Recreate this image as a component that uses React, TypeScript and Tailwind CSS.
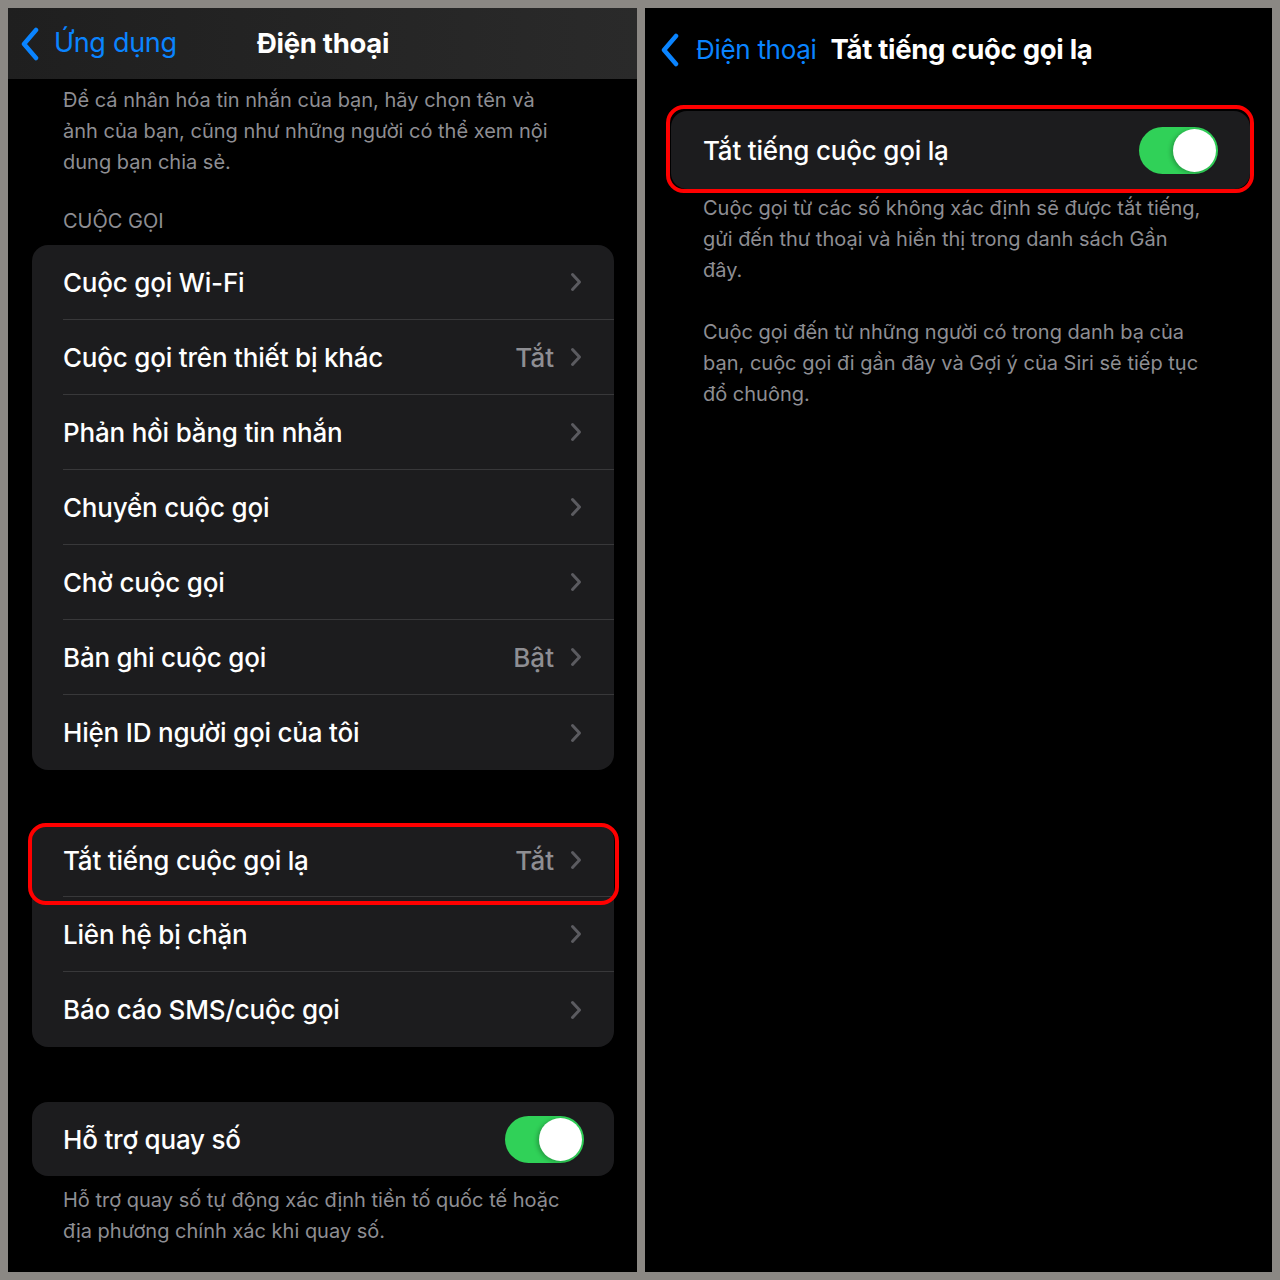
import React from 'react';

const font = { fontFamily: 'Inter, "Noto Sans", sans-serif' };

const Chevron = () => (
  <svg width="12" height="20" viewBox="0 0 12 20" fill="none">
    <path d="M2.5 2.5 L9.5 10 L2.5 17.5" stroke="#5b5b60" strokeWidth="3" strokeLinecap="round" strokeLinejoin="round" />
  </svg>
);

const BackChevron = () => (
  <svg width="20" height="34" viewBox="0 0 20 34" fill="none">
    <path d="M16 3 L4 17 L16 31" stroke="#0a84ff" strokeWidth="4.5" strokeLinecap="round" strokeLinejoin="round" />
  </svg>
);

const Toggle = () => (
  <div className="w-[79px] h-[47px] rounded-full bg-[#30d158] flex items-center justify-end pr-[2px]">
    <div className="w-[43px] h-[43px] rounded-full bg-white shadow-[-2px_1px_4px_rgba(0,0,0,0.25)]"></div>
  </div>
);

type Row = { label: string; value?: string; marked?: boolean };

const Card = ({ rows }: { rows: Row[] }) => (
  <div className="bg-[#1c1c1e] rounded-[16px] w-[582px] ml-[24px]">
    {rows.map((row, i) => (
      <div key={i} className={`relative pl-[31px] ${row.marked ? 'h-[73px]' : 'h-[75px]'}`}>
        {row.marked && (
          <div className="absolute -left-[4px] -right-[5px] -top-[1px] -bottom-[8px] border-4 border-[#ff0000] rounded-[18px]"></div>
        )}
        <div className={`h-full flex items-center pr-[32px] ${i < rows.length - 1 ? 'border-b border-[#38383a]' : ''}`}>
          <span className="flex-1 text-[26px] font-medium text-white tracking-[-0.2px]">{row.label}</span>
          {row.value && <span className="text-[26px] font-medium text-[#8e8e93] mr-[16px]">{row.value}</span>}
          <Chevron />
        </div>
      </div>
    ))}
  </div>
);

const App = () => {
  const calls: Row[] = [
    { label: 'Cuộc gọi Wi-Fi' },
    { label: 'Cuộc gọi trên thiết bị khác', value: 'Tắt' },
    { label: 'Phản hồi bằng tin nhắn' },
    { label: 'Chuyển cuộc gọi' },
    { label: 'Chờ cuộc gọi' },
    { label: 'Bản ghi cuộc gọi', value: 'Bật' },
    { label: 'Hiện ID người gọi của tôi' },
  ];
  const blocking: Row[] = [
    { label: 'Tắt tiếng cuộc gọi lạ', value: 'Tắt', marked: true },
    { label: 'Liên hệ bị chặn' },
    { label: 'Báo cáo SMS/cuộc gọi' },
  ];

  return (
    <div className="w-[1280px] h-[1280px] bg-[#8b8884] p-[8px] flex gap-[8px]" style={font}>
      {/* left screen */}
      <div className="w-[629px] h-[1264px] bg-black overflow-hidden">
        <div className="h-[71px] bg-gradient-to-r from-[#1f1f1f] to-[#2a2a2a] flex items-center relative">
          <div className="flex items-center pl-[12px] gap-[14px]">
            <BackChevron />
            <span className="text-[27px] text-[#0a84ff] tracking-[-0.3px]">Ứng dụng</span>
          </div>
          <span className="absolute left-[249px] text-[27.5px] font-bold text-white tracking-[-0.3px]">Điện thoại</span>
        </div>

        <p className="pl-[55px] pr-[69px] pt-[6px] text-[20px] leading-[31px] text-[#8e8e93]">
          Để cá nhân hóa tin nhắn của bạn, hãy chọn tên và ảnh của bạn, cũng như những người có thể xem nội dung bạn chia sẻ.
        </p>

        <p className="pl-[55px] mt-[28px] mb-[8px] text-[20px] leading-[31px] text-[#8e8e93]">CUỘC GỌI</p>

        <Card rows={calls} />

        <div className="h-[54px]"></div>
        <Card rows={blocking} />

        <div className="h-[55px]"></div>
        <div className="bg-[#1c1c1e] rounded-[16px] w-[582px] ml-[24px] h-[74px] pl-[31px] pr-[30px] flex items-center">
          <span className="flex-1 text-[26px] font-medium text-white tracking-[-0.2px]">Hỗ trợ quay số</span>
          <Toggle />
        </div>
        <p className="pl-[55px] pr-[50px] pt-[9px] text-[20px] leading-[31px] text-[#8e8e93]">
          Hỗ trợ quay số tự động xác định tiền tố quốc tế hoặc địa phương chính xác khi quay số.
        </p>
      </div>

      {/* right screen */}
      <div className="w-[627px] h-[1264px] bg-black overflow-hidden">
        <div className="h-[82px] flex items-center pl-[15px] pt-[1px]">
          <BackChevron />
          <span className="ml-[16px] text-[26px] text-[#0a84ff] tracking-[-0.3px]">Điện thoại</span>
          <span className="ml-[14px] text-[27.5px] font-bold text-white tracking-[-0.3px]">Tắt tiếng cuộc gọi lạ</span>
        </div>

        <div className="relative mt-[21px] ml-[26px] w-[579px] h-[78px] bg-[#1c1c1e] rounded-[16px] flex items-center pl-[32px] pr-[32px]">
          <div className="absolute -left-[5px] -right-[4px] -top-[6px] -bottom-[4px] border-4 border-[#ff0000] rounded-[18px]"></div>
          <span className="flex-1 text-[26px] font-medium text-white tracking-[-0.2px]">Tắt tiếng cuộc gọi lạ</span>
          <Toggle />
        </div>

        <div className="pl-[58px] pr-[67px] pt-[4px] text-[20px] leading-[31px] text-[#8e8e93]">
          <p>Cuộc gọi từ các số không xác định sẽ được tắt tiếng, gửi đến thư thoại và hiển thị trong danh sách Gần đây.</p>
          <p className="mt-[31px]">Cuộc gọi đến từ những người có trong danh bạ của bạn, cuộc gọi đi gần đây và Gợi ý của Siri sẽ tiếp tục đổ chuông.</p>
        </div>
      </div>
    </div>
  );
};

export default App;
